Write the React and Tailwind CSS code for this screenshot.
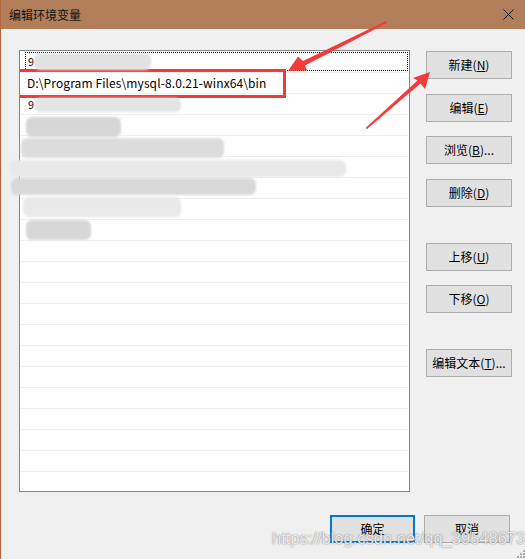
import React from 'react';

const FONT = "font-['Microsoft_YaHei','Noto_Sans_CJK_SC',sans-serif]";

const sideButtons = [
  { label: '新建', key: 'N', mt: 'mt-[1px]' },
  { label: '编辑', key: 'E', mt: 'mt-[15px]' },
  { label: '浏览', key: 'B', tail: '...', mt: 'mt-[14px]' },
  { label: '删除', key: 'D', mt: 'mt-[15px]' },
  { label: '上移', key: 'U', mt: 'mt-[36px]' },
  { label: '下移', key: 'O', mt: 'mt-[14px]' },
  { label: '编辑文本', key: 'T', tail: '...', mt: 'mt-[36px]' },
];

// blurred (redacted) entries from the screenshot
const smudges = [
  { c: 'left-[33px] top-[53px] w-[117px] h-[17px] bg-[#e2e2e2]' },
  { c: 'left-[33px] top-[98px] w-[147px] h-[14px] bg-[#e4e4e4]' },
  { c: 'left-[25px] top-[117px] w-[95px] h-[20px] bg-[#d6d6d6]' },
  { c: 'left-[20px] top-[138px] w-[203px] h-[20px] bg-[#dcdcdc]' },
  { c: 'left-[8px] top-[160px] w-[337px] h-[17px] bg-[#e8e8e8]' },
  { c: 'left-[10px] top-[178px] w-[245px] h-[17px] bg-[#d9d9d9]' },
  { c: 'left-[22px] top-[197px] w-[158px] h-[20px] bg-[#e9e9e9]' },
  { c: 'left-[25px] top-[220px] w-[65px] h-[20px] bg-[#d7d7d7]' },
];

function WinButton({ children, className = '' }) {
  return (
    <div
      className={`flex items-center justify-center h-[28px] bg-[#e1e1e1] text-[12px] text-black ${className}`}
    >
      {children}
    </div>
  );
}

export default function App() {
  const rows = Array.from({ length: 21 });

  return (
    <div className={`relative w-[525px] h-[559px] overflow-hidden bg-[#f0f0f0] border-l border-[#b0653c] flex flex-col ${FONT}`}>
      {/* title bar */}
      <div className="h-[29px] bg-[#b27e5a] flex items-center justify-between pl-[8px] pr-[11px] shrink-0">
        <span className="text-[12px] text-[#111]">编辑环境变量</span>
        <svg width="11" height="11" viewBox="0 0 11 11">
          <path d="M0.5 0.5 L10.5 10.5 M10.5 0.5 L0.5 10.5" stroke="#111" strokeWidth="1" />
        </svg>
      </div>

      <div className="flex pl-[18px] pt-[21px]">
        {/* list */}
        <div className="w-[391px] h-[442px] bg-white border border-[#838383] pt-[1px] px-[1px] overflow-hidden">
          {rows.map((_, i) => (
            <div key={i} className="h-[21px] border-b border-[#efefef] flex items-center text-[12px] text-black">
              {i === 0 && (
                <div className="ml-[4px] w-[384px] h-[19px] mb-[1px] border border-dotted border-black flex items-center pl-[2px]">
                  <span className="text-[11px]">9</span>
                </div>
              )}
              {i === 1 && (
                <div className="ml-[-7px] w-[272px] h-[29px] border-[3px] border-[#f23a3a] flex items-center pl-[10px]">
                  <span className="tracking-[0.1px]">D:\Program Files\mysql-8.0.21-winx64\bin</span>
                </div>
              )}
              {i === 2 && <span className="ml-[7px] text-[11px]">9</span>}
            </div>
          ))}
        </div>

        {/* side buttons */}
        <div className="ml-[16px] flex flex-col">
          {sideButtons.map((b) => (
            <WinButton key={b.label} className={`w-[86px] border border-[#adadad] ${b.mt}`}>
              {b.label}(<u>{b.key}</u>){b.tail}
            </WinButton>
          ))}
        </div>
      </div>

      {/* bottom buttons */}
      <div className="flex justify-end gap-[9px] pr-[15px] mt-[23px]">
        <WinButton className="w-[85px] border-2 border-[#0078d7]">确定</WinButton>
        <WinButton className="w-[86px] border border-[#adadad]">取消</WinButton>
      </div>

      {/* redaction smudges */}
      {smudges.map((s, i) => (
        <div key={i} className={`absolute rounded-[6px] blur-[1px] ${s.c}`} />
      ))}

      {/* annotation arrows */}
      <svg className="absolute left-0 top-0 pointer-events-none" width="525" height="559">
        <polygon points="385,21 302,61 297,56.5 287,71 306,70.5 304,65.5 386,23" fill="#f33b3b" />
        <polygon points="364.5,128 416.5,80.5 412,78 429,72 424,89 419.5,83.5 366,129" fill="#f33b3b" />
        <g fill="#a8a8a8">
          <rect x="522" y="550" width="2" height="2" />
          <rect x="519" y="553" width="2" height="2" />
          <rect x="522" y="553" width="2" height="2" />
          <rect x="516" y="556" width="2" height="2" />
          <rect x="519" y="556" width="2" height="2" />
          <rect x="522" y="556" width="2" height="2" />
        </g>
      </svg>

      {/* watermark */}
      <div className="absolute left-[271px] top-[528px] font-['Liberation_Sans',Arial,sans-serif] text-[16.5px] leading-[20px] text-[rgba(255,255,255,0.85)] [text-shadow:0_0_1px_rgba(90,90,90,0.7),0_0_2px_rgba(120,120,120,0.5)] pointer-events-none whitespace-nowrap">
        https://blog.csdn.net/qq_39548673
      </div>
    </div>
  );
}
